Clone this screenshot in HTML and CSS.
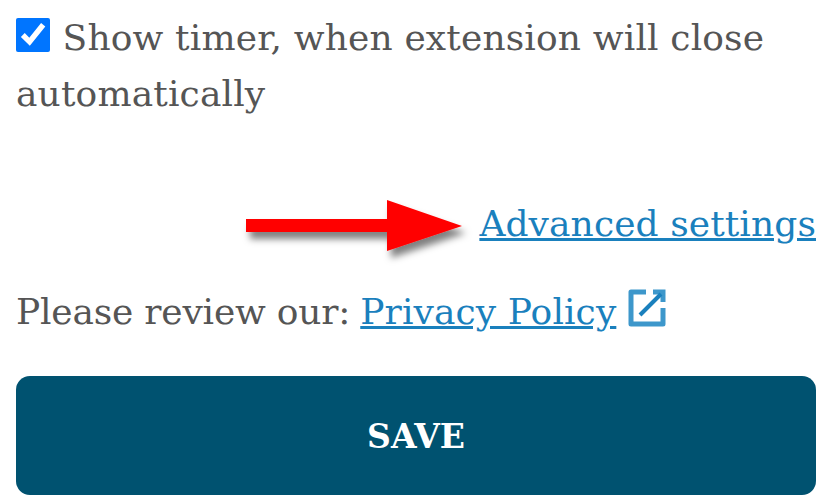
FILE: index.html
```html
<!DOCTYPE html>
<html lang="en">
    <head>
        <meta charset="utf-8">
        <meta name="viewport" content="width=device-width, initial-scale=1.0">
        <title>Settings</title>
        <link rel="stylesheet" href="styles.css">
    </head>
    <body>
        <main>
            <label class="timer">
                <input type="checkbox" checked>
                Show timer, when extension will close automatically
            </label>
            <p class="advanced">
                <a href="#">Advanced settings</a>
                <svg class="arrow" width="240" height="70" viewBox="0 0 240 70">
                    <defs>
                        <filter id="shadow" x="-10%" y="-30%" width="120%" height="170%">
                            <feDropShadow dx="4" dy="7" stdDeviation="3.5" flood-color="#000" flood-opacity="0.5"/>
                        </filter>
                    </defs>
                    <path d="M6 19H147V0L222 26L147 51V32H6Z" fill="#f00" filter="url(#shadow)"/>
                </svg>
            </p>
            <p class="review">
                <span>Please review our:</span> <a href="#">Privacy Policy</a>
                <svg class="external" width="38" height="38" viewBox="0 0 38 38">
                    <path d="M18 3H3V35H35V19" fill="none" stroke="#3d97cb" stroke-width="5" stroke-linejoin="round"/>
                    <path d="M25 3H35V13" fill="none" stroke="#3d97cb" stroke-width="5"/>
                    <path d="M33 5L12 26" fill="none" stroke="#1a80bd" stroke-width="4"/>
                </svg>
            </p>
            <button class="save" type="button">SAVE</button>
        </main>
    </body>
</html>
```
FILE: styles.css
```css
html, body {
    margin: 0;
    height: 100%;
    overflow: hidden;
}
body {
    background: #fff;
    color: #555;
    font-family: "DejaVu Serif", "Liberation Serif", serif;
    font-size: 36px;
    letter-spacing: .1px;
    line-height: 56px;
}
main {
    display: flex;
    flex-direction: column;
    height: 495px;
    padding: 10px 24px 0 16px;
    box-sizing: border-box;
}
p {
    margin: 0;
}
a {
    color: #1a80bd;
}
.timer {
    display: block;
    letter-spacing: .15px;
}
.timer input {
    width: 34px;
    height: 34px;
    margin: 0 1px 0 0;
    vertical-align: -2px;
    accent-color: #0075ff;
}
.advanced {
    position: relative;
    margin-top: 74px;
    text-align: right;
}
.arrow {
    position: absolute;
    left: 224px;
    top: 4px;
}
.review {
    margin-top: 32px;
    display: flex;
    align-items: center;
    gap: 10px;
}
.review span {
    letter-spacing: -.2px;
}
.external {
    flex: none;
    margin: -8px 0 0 2px;
}
.save {
    margin-top: auto;
    height: 119px;
    flex: none;
    padding-top: 3px;
    border: 0;
    border-radius: 14px;
    background: #005270;
    color: #fff;
    font-family: inherit;
    font-size: 33px;
    font-weight: bold;
}
```
